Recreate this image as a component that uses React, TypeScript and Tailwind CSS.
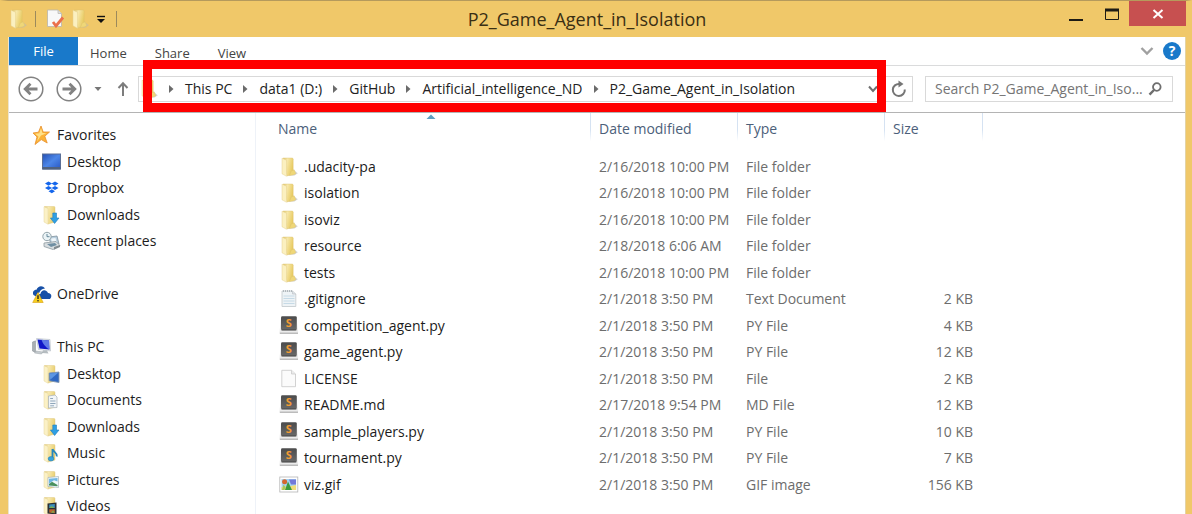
import type { ReactNode } from "react";

type IconName =
  | "folder" | "star" | "desktop" | "dropbox" | "downloads" | "recent" | "onedrive" | "pc"
  | "folder-desktop" | "folder-documents" | "folder-music" | "folder-pictures" | "folder-videos"
  | "text" | "sublime" | "blank" | "image" | "properties";

function FolderShape() {
  return (
    <>
      <defs>
        <linearGradient id="folderBody" x1="0" y1="0" x2="1" y2="0.3">
          <stop offset="0" stopColor="#e2c873" />
          <stop offset="0.35" stopColor="#f8eab2" />
          <stop offset="1" stopColor="#e9cf70" />
        </linearGradient>
      </defs>
      <path d="M2.5 1.5 H12 Q13 1.5 13 2.5 V17 L6 19 Z" fill="url(#folderBody)" stroke="#dcc274" strokeWidth="0.4" />
      <path d="M2 1.8 L6 3.4 V19.2 L2 17 Z" fill="#fbf1c6" stroke="#e6d69c" strokeWidth="0.5" />
    </>
  );
}

const artwork: Record<IconName, ReactNode> = {
  folder: (
    <>
      <path d="M14 12.5 L18.8 16.2 L15.5 18.6 H9 Z" fill="#b9b9b9" opacity="0.6" />
      <path d="M4 1 H13 Q14.2 1 14.2 2.2 V17 L8 19 Z" fill="url(#folderMain)" stroke="#dcc06a" strokeWidth="0.4" />
      <defs>
        <linearGradient id="folderMain" x1="0" y1="0" x2="1" y2="0.4">
          <stop offset="0" stopColor="#dfc36a" />
          <stop offset="0.4" stopColor="#f7e8ab" />
          <stop offset="1" stopColor="#e8cb62" />
        </linearGradient>
      </defs>
      <path d="M3 1.2 L7.5 3.2 V19.3 L3 16.8 Z" fill="#fbf0c0" stroke="#e6d391" strokeWidth="0.5" />
      <path d="M10.5 18.4 L12.2 14 L15.2 12.8 L16.8 16.8 L14 18 Z" fill="#efd778" stroke="#dcc06a" strokeWidth="0.4" />
    </>
  ),
  star: (
    <>
      <path d="M9 1 L11.2 7 L17.5 7 L12.8 11.2 L15.2 18 L9.3 14.6 L3 19.5 L5 12 L1 8 L6.5 7.2 Z" fill="#fbb236" stroke="#e88f2c" strokeWidth="0.8" />
      <path d="M9 3 L10.4 8 L14.5 8.2 L9 10.5 L5 16.5 L6.5 11.5 L3 8.7 L7.3 8.2 Z" fill="#ffe088" />
    </>
  ),
  desktop: (
    <>
      <defs>
        <linearGradient id="screen" x1="0" y1="0" x2="1" y2="1">
          <stop offset="0" stopColor="#2450b4" />
          <stop offset="0.5" stopColor="#4c86e8" />
          <stop offset="1" stopColor="#2857c4" />
        </linearGradient>
      </defs>
      <rect x="0.5" y="2" width="18" height="15" fill="url(#screen)" stroke="#5a6f97" />
      <rect x="0.5" y="15" width="18" height="2.5" fill="#50627f" />
    </>
  ),
  dropbox: (
    <path
      d="M6.5 3.5 L10 5.6 L6.5 7.7 L3 5.6 Z M13 3.5 L16.5 5.6 L13 7.7 L9.5 5.6 Z M6.5 7.9 L10 10 L6.5 12.1 L3 10 Z M13 7.9 L16.5 10 L13 12.1 L9.5 10 Z M9.8 11.2 L13 13.2 L9.8 15.2 L6.5 13.2 Z"
      fill="#1466ec"
    />
  ),
  downloads: (
    <>
      <FolderShape />
      <path d="M10.8 8 H14.5 V13 H17 L12.6 18.5 L8.4 13 H10.8 Z" fill="#2f9fe3" stroke="#1e7dbd" strokeWidth="0.6" />
    </>
  ),
  recent: (
    <>
      <path d="M7 6 L15 5 L17 13 L9 14 Z" fill="#b9cfdf" stroke="#7d8f9c" strokeWidth="0.8" />
      <path d="M9 7.5 L13.5 7 L14.5 11 L10 11.8 Z" fill="#eff6fa" />
      <path d="M2 12 L14 10.5 L18 14.5 L11 18.5 L2 15.5 Z" fill="#d9dee1" stroke="#8d999f" strokeWidth="0.8" />
      <path d="M5 13 L13 12 L15 14 L9 16 Z" fill="#6f8fa3" />
      <circle cx="5" cy="5.5" r="4.2" fill="#eaf3f6" stroke="#93a4ab" />
      <path d="M5 3 V5.7 H7.5" fill="none" stroke="#587d90" strokeWidth="0.9" />
      <path d="M12 16 L18 14 V16 L12 18.8 Z" fill="#828b90" />
    </>
  ),
  onedrive: (
    <>
      <path d="M1.5 11 C0 8 2 5.5 4.5 5.7 C5.8 2 10.5 1 13 4.5 C9.5 4.8 7.8 7 7.5 8.5 C5 8.8 4 11 5 13 Z" fill="#1750a7" />
      <path d="M8 15 C4.8 14 5.6 9.6 8.6 9.8 C9 6 14 4.6 16 9 C19 9 20.4 12 18.4 14.5 Q18 15 17 15 Z" fill="#1750a7" />
      <path d="M6 8.5 L11.2 18.5 H0.7 Z" fill="#f7cf1e" stroke="#d99e10" strokeWidth="0.6" />
      <path d="M6 11.3 V15" stroke="#222" strokeWidth="1.4" />
      <circle cx="6" cy="16.8" r="0.8" fill="#222" />
    </>
  ),
  pc: (
    <>
      <path d="M0.5 5 L3.5 3.8 V15.5 L0.5 14 Z" fill="#a9afb3" stroke="#858d92" strokeWidth="0.5" />
      <path d="M4.5 1.5 L18 2.5 L18.5 14 L6.5 12.5 Z" fill="#e4e8ee" stroke="#b2bac3" strokeWidth="0.6" />
      <path d="M5.5 2.5 L17 3.4 L17.4 12.6 L7.5 11.4 Z" fill="#1018c8" />
      <path d="M9.5 2.8 L17 3.4 L17.4 12.6 Q11.5 9 9.5 2.8 Z" fill="#5f7ae6" />
      <path d="M11 13.2 L15 13.6 L16.5 16.5 L10 16 Z" fill="#b5bcc0" />
      <path d="M4 14 L11 15 L9.5 17 L2.5 16 Z" fill="#c4cace" stroke="#9da5a9" strokeWidth="0.5" />
    </>
  ),
  "folder-desktop": (
    <>
      <FolderShape />
      <path d="M7.2 9 L17 8 V18.5 L7.2 16.8 Z" fill="#2e68c2" stroke="#8296b0" strokeWidth="0.9" />
      <path d="M7.8 9.6 L16.2 8.8 L8.2 15.8 Z" fill="#5c96e2" />
    </>
  ),
  "folder-documents": (
    <>
      <FolderShape />
      <path d="M6.5 6 L13 5 L15 7 V17.5 L6.5 18 Z" fill="#f1f5f8" stroke="#a6b0b8" strokeWidth="0.7" />
      <path d="M8.2 8.5 H11 M8.2 11 H13.5 M8.2 13.5 H13.5 M8.2 15.8 H12" stroke="#90a7bb" />
    </>
  ),
  "folder-music": (
    <>
      <FolderShape />
      <path d="M10.5 6 C11 9 15.5 9.5 14.8 13.5 M10.5 6 V15.5" fill="none" stroke="#2586bd" strokeWidth="1.8" />
      <ellipse cx="9" cy="15.8" rx="2.8" ry="2.2" fill="#38a4dc" stroke="#2079ac" strokeWidth="0.5" />
    </>
  ),
  "folder-pictures": (
    <>
      <FolderShape />
      <path d="M6 7.5 L16.5 6.5 V17.5 L6 16.5 Z" fill="#eff8fb" stroke="#a7b4ba" strokeWidth="0.7" />
      <path d="M7 8.8 L15.5 8 V11.5 L12 10.2 L7 13.5 Z" fill="#70b7e4" />
      <path d="M7 14 L10 11.8 L15.5 15 V16.3 L7 15.5 Z" fill="#49905f" />
    </>
  ),
  "folder-videos": (
    <>
      <FolderShape />
      <path d="M5.5 7.5 L14.5 6.5 V18.5 L5.5 17.5 Z" fill="#2c3035" />
      <path d="M7.2 8.5 L12.8 8 V12 H7.2 Z" fill="#3b90bd" />
      <path d="M7.2 13.2 H12.8 V17.2 L7.2 16.6 Z" fill="#b9652f" />
      <path d="M7.2 12 L9.5 10 L12.8 12 Z M9 16.7 L11 14.5 L12.8 16.5 Z" fill="#7aad52" />
    </>
  ),
  text: (
    <>
      <path d="M3 2 H13.5 L16.8 5 V17.5 H3 Z" fill="#eef3f6" stroke="#c2c8cc" strokeWidth="0.8" />
      <path d="M13.5 2 V5 H16.8" fill="#dde2e5" stroke="#b8bec2" strokeWidth="0.6" />
      <path d="M4 2 H13" stroke="#a3abb0" strokeWidth="1.4" strokeDasharray="1 1" />
      <path d="M4.5 7 H15.5 M4.5 9.5 H15.5 M4.5 12 H15.5 M4.5 14.5 H15.5" stroke="#c6dae6" />
    </>
  ),
  sublime: (
    <>
      <defs>
        <linearGradient id="keycap" x1="0" y1="0" x2="0" y2="1">
          <stop offset="0" stopColor="#4b4b4b" />
          <stop offset="1" stopColor="#6a6a6a" />
        </linearGradient>
      </defs>
      <path d="M2 2 H17.5 L19.2 16 Q19.2 17.6 17.8 17.6 H1.8 Q0.5 17.6 0.5 16 Z" fill="#ececec" />
      <path d="M0.8 17.2 H19" stroke="#a8a8a8" strokeWidth="1.1" />
      <rect x="2" y="0.2" width="15.8" height="14" rx="1.4" fill="url(#keycap)" />
      <path d="M2.4 14 H17.4" stroke="#3c3c3c" strokeWidth="0.8" />
      <text x="9.8" y="10.8" textAnchor="middle" fontSize="11" fontWeight="700" fill="#f29b34" fontFamily="Open Sans, sans-serif">S</text>
    </>
  ),
  blank: (
    <>
      <path d="M2.8 1.3 H12.5 L16.5 5 V17.7 H2.8 Z" fill="#fbfbfb" stroke="#c6c6c6" strokeWidth="0.8" />
      <path d="M12.5 1.3 V5 H16.5" fill="#ececec" stroke="#c6c6c6" strokeWidth="0.7" />
    </>
  ),
  image: (
    <>
      <rect x="0.8" y="2" width="18" height="15" fill="#fff" stroke="#b5b5b5" strokeWidth="0.8" />
      <rect x="2.5" y="4" width="14.6" height="11" fill="#a5d3f0" />
      <path d="M10 4.5 H17 V9.5 H12 Z" fill="#7278d8" />
      <path d="M2.5 15 V12 L12 11 L17.1 10 V15 Z" fill="#f0dd78" />
      <path d="M6 15 L9 6.5 L13 15 Z" fill="#3c9a3e" />
      <circle cx="5.6" cy="6.8" r="2.5" fill="#d5672f" />
      <path d="M4.5 9.5 L6.5 12 L5.5 15 H3 Z" fill="#a9c65a" />
    </>
  ),
  properties: (
    <>
      <path d="M1.5 1 H12 L15.5 4.5 V17.5 H1.5 Z" fill="#f8f8f8" stroke="#b8b5ad" strokeWidth="0.8" />
      <path d="M12 1 V4.5 H15.5" fill="#ddd" stroke="#b8b5ad" strokeWidth="0.7" />
      <path d="M7 13 L10 17 L17 8.5" fill="none" stroke="#ea6f4b" strokeWidth="2.8" />
    </>
  ),
};

function Icon({ name }: { name: IconName }) {
  return (
    <svg viewBox="0 0 20 20" className="size-5 shrink-0" aria-hidden="true">
      {artwork[name]}
    </svg>
  );
}

type NavEntry = { label: string; icon: IconName; nested?: boolean } | null;

const navigation: NavEntry[] = [
  { label: "Favorites", icon: "star" },
  { label: "Desktop", icon: "desktop", nested: true },
  { label: "Dropbox", icon: "dropbox", nested: true },
  { label: "Downloads", icon: "downloads", nested: true },
  { label: "Recent places", icon: "recent", nested: true },
  null,
  { label: "OneDrive", icon: "onedrive" },
  null,
  { label: "This PC", icon: "pc" },
  { label: "Desktop", icon: "folder-desktop", nested: true },
  { label: "Documents", icon: "folder-documents", nested: true },
  { label: "Downloads", icon: "downloads", nested: true },
  { label: "Music", icon: "folder-music", nested: true },
  { label: "Pictures", icon: "folder-pictures", nested: true },
  { label: "Videos", icon: "folder-videos", nested: true },
];

type FileEntry = { name: string; icon: IconName; modified: string; type: string; size?: string };

const files: FileEntry[] = [
  { name: ".udacity-pa", icon: "folder", modified: "2/16/2018 10:00 PM", type: "File folder" },
  { name: "isolation", icon: "folder", modified: "2/16/2018 10:00 PM", type: "File folder" },
  { name: "isoviz", icon: "folder", modified: "2/16/2018 10:00 PM", type: "File folder" },
  { name: "resource", icon: "folder", modified: "2/18/2018 6:06 AM", type: "File folder" },
  { name: "tests", icon: "folder", modified: "2/16/2018 10:00 PM", type: "File folder" },
  { name: ".gitignore", icon: "text", modified: "2/1/2018 3:50 PM", type: "Text Document", size: "2 KB" },
  { name: "competition_agent.py", icon: "sublime", modified: "2/1/2018 3:50 PM", type: "PY File", size: "4 KB" },
  { name: "game_agent.py", icon: "sublime", modified: "2/1/2018 3:50 PM", type: "PY File", size: "12 KB" },
  { name: "LICENSE", icon: "blank", modified: "2/1/2018 3:50 PM", type: "File", size: "2 KB" },
  { name: "README.md", icon: "sublime", modified: "2/17/2018 9:54 PM", type: "MD File", size: "12 KB" },
  { name: "sample_players.py", icon: "sublime", modified: "2/1/2018 3:50 PM", type: "PY File", size: "10 KB" },
  { name: "tournament.py", icon: "sublime", modified: "2/1/2018 3:50 PM", type: "PY File", size: "7 KB" },
  { name: "viz.gif", icon: "image", modified: "2/1/2018 3:50 PM", type: "GIF image", size: "156 KB" },
];

const crumbs = ["This PC", "data1 (D:)", "GitHub", "Artificial_intelligence_ND", "P2_Game_Agent_in_Isolation"];

function TitleBar() {
  return (
    <header className="flex h-9 shrink-0 items-start">
      <div className="flex h-full items-center">
        <Icon name="folder" />
        <span className="ml-[7px] h-4 w-px bg-[#9c8a5c]" />
        <button type="button" aria-label="Properties" className="ml-[10px]">
          <Icon name="properties" />
        </button>
        <button type="button" aria-label="New folder" className="ml-1">
          <Icon name="folder" />
        </button>
        <button type="button" aria-label="Customize toolbar" className="ml-[6px]">
          <svg viewBox="0 0 10 10" className="size-[10px]">
            <path d="M1 2.5 H9" stroke="#111" strokeWidth="1.4" />
            <path d="M1 5 H9 L5 9 Z" fill="#111" />
          </svg>
        </button>
        <span className="ml-[10px] h-4 w-px bg-[#9c8a5c]" />
      </div>
      <h1 className="flex-1 self-center text-center text-[18px] text-[#3a2f14]">P2_Game_Agent_in_Isolation</h1>
      <div className="flex">
        <button type="button" aria-label="Minimize" className="flex h-7 w-[38px] items-center justify-center">
          <svg viewBox="0 0 16 16" className="size-4">
            <path d="M1 13 H15" stroke="#1c1a14" strokeWidth="2" />
          </svg>
        </button>
        <button type="button" aria-label="Maximize" className="flex h-[26px] w-[34px] items-center justify-center">
          <svg viewBox="0 0 16 16" className="size-4">
            <path d="M1.5 3 V13.5 H14.5 V3" fill="none" stroke="#1c1a14" />
            <path d="M1 4 H15" stroke="#1c1a14" strokeWidth="3" />
          </svg>
        </button>
        <button type="button" aria-label="Close" className="flex h-[25px] w-[57px] items-center justify-center bg-[#c75050]">
          <svg viewBox="0 0 12 12" className="size-3">
            <path d="M1.5 2 L10.5 10 M10.5 2 L1.5 10" stroke="#fff" strokeWidth="2" />
          </svg>
        </button>
      </div>
    </header>
  );
}

function Ribbon() {
  return (
    <nav aria-label="Ribbon" className="flex h-[29px] shrink-0 items-center border-b border-[#dadbdc] text-[13px] text-[#444]">
      <button type="button" className="h-full w-[69px] bg-[#1979ca] text-white">File</button>
      <div className="flex gap-7 pt-1 pl-3">
        <button type="button">Home</button>
        <button type="button">Share</button>
        <button type="button">View</button>
      </div>
      <button type="button" aria-label="Expand the ribbon" className="ml-auto">
        <svg viewBox="0 0 14 10" className="h-[10px] w-[14px]">
          <path d="M1.5 2 L7 7.5 L12.5 2" fill="none" stroke="#a0a0a0" strokeWidth="2.4" />
        </svg>
      </button>
      <button type="button" aria-label="Help" className="mr-1 ml-[9px]">
        <svg viewBox="0 0 18 18" className="size-[18px]">
          <circle cx="9" cy="9" r="9" fill="#1979ca" />
          <text x="9" y="14" textAnchor="middle" fontSize="14" fontWeight="700" fill="#fff" fontFamily="Open Sans, sans-serif">?</text>
        </svg>
      </button>
    </nav>
  );
}

function RoundArrow({ label, flipped }: { label: string; flipped?: boolean }) {
  return (
    <button type="button" aria-label={label}>
      <svg viewBox="0 0 26 26" className="size-[26px]">
        <circle cx="13" cy="13" r="11.8" fill="none" stroke="#828282" strokeWidth="1.5" />
        <path
          d={flipped ? "M6.5 13 H18.5 M13.5 7.8 L18.8 13 L13.5 18.2" : "M19.5 13 H7.5 M12.5 7.8 L7.2 13 L12.5 18.2"}
          fill="none"
          stroke="#828282"
          strokeWidth="2.8"
        />
      </svg>
    </button>
  );
}

function AddressRow() {
  return (
    <div className="flex h-[47px] shrink-0 items-center border-b border-[#b4b4b4] pr-3 pb-px pl-[9px]">
      <RoundArrow label="Back" />
      <span className="w-3" />
      <RoundArrow label="Forward" flipped />
      <button type="button" aria-label="Recent locations" className="ml-3">
        <svg viewBox="0 0 8 6" className="h-[6px] w-2">
          <path d="M0.5 1 H7.5 L4 5 Z" fill="#777" />
        </svg>
      </button>
      <button type="button" aria-label="Up" className="ml-[15px]">
        <svg viewBox="0 0 12 16" className="h-4 w-3">
          <path d="M6 15 V2.5 M1.5 7 L6 2.3 L10.5 7" fill="none" stroke="#7d7d7d" strokeWidth="2" />
        </svg>
      </button>
      <div className="relative ml-[9px] flex h-[26px] min-w-0 flex-1 items-center border border-[#d9d9d9] pr-1 text-[#222]">
        <Icon name="folder" />
        <ol className="ml-[9px] flex flex-1 items-center gap-[10px] whitespace-nowrap">
          {crumbs.map((crumb) => (
            <li key={crumb} className="flex items-center gap-[11px]">
              <svg viewBox="0 0 6 8" className="h-2 w-[6px]" aria-hidden="true">
                <path d="M1 0 L5.5 4 L1 8 Z" fill="#6b6b6b" />
              </svg>
              <a href="#">{crumb}</a>
            </li>
          ))}
        </ol>
        <button type="button" aria-label="Previous locations" className="mr-3">
          <svg viewBox="0 0 10 8" className="h-2 w-[10px]">
            <path d="M1 1.5 L5 6 L9 1.5" fill="none" stroke="#707070" strokeWidth="2" />
          </svg>
        </button>
        <button type="button" aria-label="Refresh">
          <svg viewBox="0 0 18 18" className="size-[18px]">
            <path d="M14.8 9.5 A6 6 0 1 1 9.5 4" fill="none" stroke="#757575" strokeWidth="2" />
            <path d="M8.5 0.5 L13.5 4 L8.5 7.5 Z" fill="#757575" />
          </svg>
        </button>
        <div aria-hidden="true" className="pointer-events-none absolute -top-[17px] right-[26px] -bottom-[11px] left-1 border-9 border-[#ff0000]" />
      </div>
      <label className="ml-3 flex h-[26px] w-[248px] items-center border border-[#d9d9d9] pr-[10px] pl-[9px]">
        <input
          type="text"
          aria-label="Search this folder"
          placeholder="Search P2_Game_Agent_in_Iso..."
          className="min-w-0 flex-1 bg-transparent outline-none placeholder:text-[#757575]"
        />
        <svg viewBox="0 0 14 14" className="size-[14px]" aria-hidden="true">
          <circle cx="8.8" cy="5" r="3.8" fill="none" stroke="#6e6e6e" strokeWidth="1.8" />
          <path d="M6 8 L1.5 12.7" stroke="#6e6e6e" strokeWidth="2.4" />
        </svg>
      </label>
    </div>
  );
}

function Sidebar() {
  return (
    <nav aria-label="Folders" className="w-[247px] shrink-0 overflow-hidden border-r border-[#eef2f8] pt-[9px] text-[#1c1c1c]">
      <ul>
        {navigation.map((entry, index) => (
          <li key={index} className="odd:h-[26px] even:h-[27px]">
            {entry && (
              <a href="#" className={`flex h-full items-center gap-[5px] ${entry.nested ? "pl-[33px]" : "pl-[23px]"}`}>
                <Icon name={entry.icon} />
                {entry.label}
              </a>
            )}
          </li>
        ))}
      </ul>
    </nav>
  );
}

const headCell =
  "relative bg-[linear-gradient(#d5e2f2_60%,#ffffff)] bg-[length:1px_28px] bg-right-top bg-no-repeat pb-2 pl-2 text-left font-normal";

function FileTable() {
  return (
    <main className="min-w-0 flex-1 overflow-hidden pl-[14px]">
      <table className="w-[713px] table-fixed text-[#6d6d6d]">
        <colgroup>
          <col className="w-[321px]" />
          <col className="w-[147px]" />
          <col className="w-[147px]" />
          <col className="w-[98px]" />
        </colgroup>
        <thead>
          <tr className="h-10 text-[#4c607a]">
            <th scope="col" aria-sort="ascending" className={headCell}>
              Name
              <svg viewBox="0 0 10 5" className="absolute top-px left-1/2 h-[5px] w-[10px] -translate-x-1/2">
                <path d="M0.5 5 L5 0.5 L9.5 5 Z" fill="#5d9fc0" />
              </svg>
            </th>
            <th scope="col" className={headCell}>Date modified</th>
            <th scope="col" className={headCell}>Type</th>
            <th scope="col" className={headCell}>Size</th>
          </tr>
        </thead>
        <tbody className="whitespace-nowrap">
          {files.map((file) => (
            <tr key={file.name} className="odd:h-[27px] even:h-[26px]">
              <td className="p-0 pl-[9px]">
                <div className="flex items-center gap-[5px] text-[#1c1c1c]">
                  <Icon name={file.icon} />
                  {file.name}
                </div>
              </td>
              <td className="p-0 pl-2">{file.modified}</td>
              <td className="p-0 pl-2">{file.type}</td>
              <td className="p-0 pr-[10px] text-right">{file.size}</td>
            </tr>
          ))}
        </tbody>
      </table>
    </main>
  );
}

export default function App() {
  return (
    <div className="flex h-screen flex-col overflow-hidden border-t border-r-[6px] border-l-8 border-t-[#b59a5c] border-r-[#f0c869] border-l-[#f0c869] bg-[#f0c869] font-['Open_Sans','Noto_Sans',sans-serif] text-[14px] leading-5">
      <TitleBar />
      <div className="flex min-h-0 flex-1 flex-col border-r border-l border-r-[#e3d3a4] border-l-[#ece4cf] bg-white">
        <Ribbon />
        <AddressRow />
        <div className="flex min-h-0 flex-1">
          <Sidebar />
          <FileTable />
        </div>
      </div>
    </div>
  );
}
